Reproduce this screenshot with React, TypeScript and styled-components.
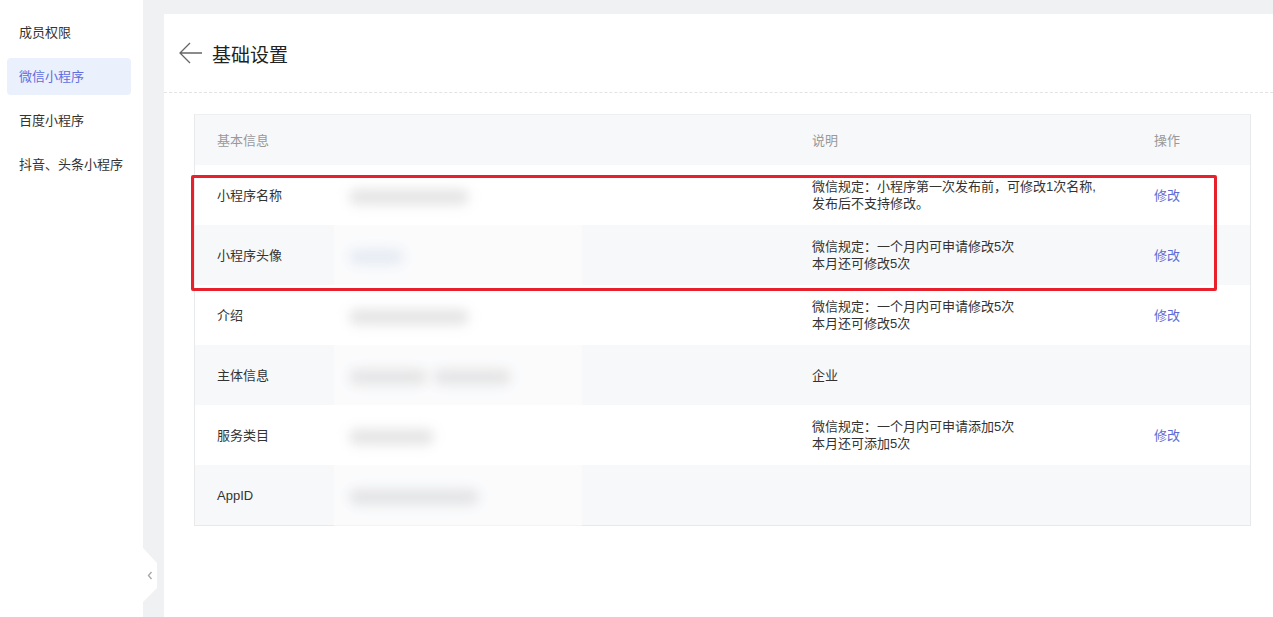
import styled, { createGlobalStyle } from "styled-components";

const GlobalStyle = createGlobalStyle`
  html, body {
    margin: 0;
    padding: 0;
    background: #f0f1f3;
    font-family: "Liberation Sans", "Noto Sans CJK SC", sans-serif;
    color: #333;
  }
`;

const Page = styled.div`
  display: flex;
  height: 617px;
  overflow: hidden;
`;

const Sidebar = styled.div`
  width: 143px;
  flex-shrink: 0;
  background: #fff;
  padding: 14px 12px 0 7px;
  box-sizing: border-box;
  display: flex;
  flex-direction: column;
  gap: 7px;
`;

const NavItem = styled.div<{ active?: boolean }>`
  height: 37px;
  line-height: 37px;
  padding-left: 12px;
  border-radius: 4px;
  font-size: 13px;
  color: ${(p) => (p.active ? "#5f6fe0" : "#333")};
  background: ${(p) => (p.active ? "#ebf0fd" : "transparent")};
`;

const Gutter = styled.div`
  width: 21px;
  flex-shrink: 0;
  position: relative;
`;

const Collapse = styled.div`
  position: absolute;
  left: 0;
  top: 548px;
  width: 14px;
  height: 54px;
  background: #fff;
  clip-path: polygon(0 0, 100% 28%, 100% 74%, 0 100%);
  display: flex;
  align-items: center;
  justify-content: center;
  padding-right: 1px;
  box-sizing: border-box;
`;

const Main = styled.div`
  flex: 1;
  margin-top: 14px;
  background: #fff;
  display: flex;
  flex-direction: column;
`;

const Header = styled.div`
  height: 79px;
  display: flex;
  align-items: center;
  gap: 9px;
  padding-left: 15px;
  border-bottom: 1px dashed #e3e3e3;
  box-sizing: border-box;
`;

const Title = styled.h1`
  margin: 0;
  font-size: 19px;
  font-weight: normal;
  color: #222;
`;

const TableWrap = styled.div`
  position: relative;
  margin: 21px 22px 0 30px;
`;

const Table = styled.div`
  border: 1px solid #e8e9eb;
  border-top-color: #eeeff1;
`;

const Row = styled.div<{ shaded?: boolean; head?: boolean }>`
  display: grid;
  grid-template-columns: 132px 463px 342px 1fr;
  height: ${(p) => (p.head ? "50px" : "60px")};
  align-items: center;
  background: ${(p) => (p.shaded ? "#f7f8fa" : "#fff")};
  color: ${(p) => (p.head ? "#999" : "#333")};
  font-size: 13px;
`;

const Cell = styled.div`
  padding-left: 22px;
  line-height: 17px;
`;

const Link = styled.span`
  color: #5d6bd6;
  cursor: pointer;
`;

const BlurGroup = styled.div`
  display: flex;
  gap: 6px;
  padding-top: 4px;
`;

const Blur = styled.div<{ w: number; tint?: string }>`
  width: ${(p) => p.w}px;
  height: 16px;
  border-radius: 8px;
  background: ${(p) => p.tint || "#d0d0d2"};
  filter: blur(6px);
`;

const Veil = styled.div`
  position: absolute;
  left: 140px;
  top: 53px;
  width: 248px;
  height: 365px;
  background: rgba(255, 255, 255, 0.45);
  pointer-events: none;
`;

const Highlight = styled.div`
  position: absolute;
  left: -3px;
  top: 61px;
  width: 1026px;
  height: 116px;
  border: 3px solid #e8202c;
  border-radius: 2px;
  box-sizing: border-box;
  pointer-events: none;
`;

const rows = [
  {
    label: "小程序名称",
    blur: [{ w: 120 }],
    desc: ["微信规定：小程序第一次发布前，可修改1次名称,", "发布后不支持修改。"],
    action: true,
  },
  {
    label: "小程序头像",
    blur: [{ w: 55, tint: "#d3dcea" }],
    desc: ["微信规定：一个月内可申请修改5次", "本月还可修改5次"],
    action: true,
  },
  {
    label: "介绍",
    blur: [{ w: 120 }],
    desc: ["微信规定：一个月内可申请修改5次", "本月还可修改5次"],
    action: true,
  },
  {
    label: "主体信息",
    blur: [{ w: 78 }, { w: 78 }],
    desc: ["企业"],
    action: false,
  },
  {
    label: "服务类目",
    blur: [{ w: 85 }],
    desc: ["微信规定：一个月内可申请添加5次", "本月还可添加5次"],
    action: true,
  },
  {
    label: "AppID",
    blur: [{ w: 130, tint: "#cdced1" }],
    desc: [],
    action: false,
  },
];

function App() {
  return (
    <>
      <GlobalStyle />
      <Page>
        <Sidebar>
          <NavItem>成员权限</NavItem>
          <NavItem active>微信小程序</NavItem>
          <NavItem>百度小程序</NavItem>
          <NavItem>抖音、头条小程序</NavItem>
        </Sidebar>
        <Gutter>
          <Collapse>
            <svg width="6" height="9" viewBox="0 0 6 9">
              <path d="M4.5 1 L1.5 4.5 L4.5 8" fill="none" stroke="#aaa" strokeWidth="1.4" />
            </svg>
          </Collapse>
        </Gutter>
        <Main>
          <Header>
            <svg width="24" height="22" viewBox="0 0 24 22">
              <path d="M11 1 L1 11 L11 21 M1 11 H23" fill="none" stroke="#666" strokeWidth="1.3" />
            </svg>
            <Title>基础设置</Title>
          </Header>
          <TableWrap>
            <Table>
              <Row head shaded>
                <Cell>基本信息</Cell>
                <Cell />
                <Cell>说明</Cell>
                <Cell>操作</Cell>
              </Row>
              {rows.map((r, i) => (
                <Row key={r.label} shaded={i % 2 === 1}>
                  <Cell>{r.label}</Cell>
                  <Cell>
                    <BlurGroup>
                      {r.blur.map((b, j) => (
                        <Blur key={j} w={b.w} tint={b.tint} />
                      ))}
                    </BlurGroup>
                  </Cell>
                  <Cell>
                    {r.desc.map((d) => (
                      <div key={d}>{d}</div>
                    ))}
                  </Cell>
                  <Cell>{r.action && <Link>修改</Link>}</Cell>
                </Row>
              ))}
            </Table>
            <Veil />
            <Highlight />
          </TableWrap>
        </Main>
      </Page>
    </>
  );
}

export default App;
